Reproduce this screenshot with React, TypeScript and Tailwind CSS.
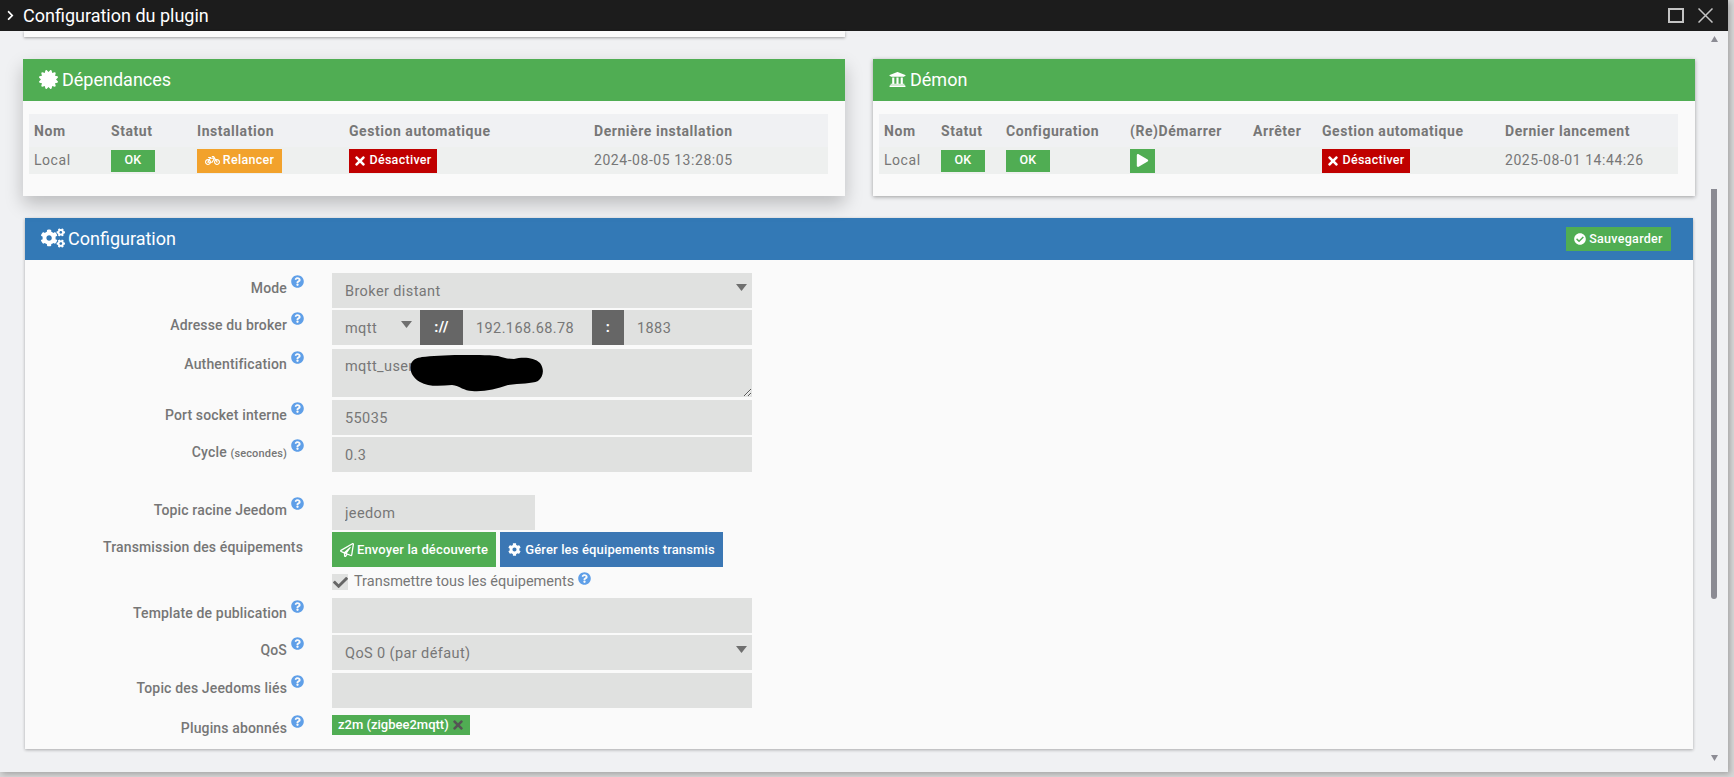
import { ReactNode } from 'react';
import {
  FaBicycle,
  FaCertificate,
  FaCheck,
  FaCheckCircle,
  FaChevronRight,
  FaCog,
  FaCogs,
  FaPlay,
  FaQuestionCircle,
  FaRegPaperPlane,
  FaTimes,
  FaUniversity,
} from 'react-icons/fa';

function Help() {
  return <FaQuestionCircle className="text-[13px] text-[#5f9fe8] shrink-0" />;
}

function Triangle() {
  return (
    <svg width="11" height="7" viewBox="0 0 11 7" className="shrink-0">
      <path d="M0 0h11L5.5 7z" fill="#6f6f6f" />
    </svg>
  );
}

function Badge({ children, color, w, h = 'h-6' }: { children: ReactNode; color: string; w: string; h?: string }) {
  return (
    <span className={`inline-flex items-center justify-center gap-[3px] align-middle text-[12.5px] font-medium tracking-[0.3px] text-white ${color} ${w} ${h}`}>
      {children}
    </span>
  );
}

function Ok() {
  return <Badge color="bg-[#50ad53]" w="w-[44px]" h="h-[22px]">OK</Badge>;
}

function Disable({ w }: { w: string }) {
  return (
    <Badge color="bg-[#c00000]" w={w}>
      <FaTimes className="-mx-[1px] text-[14px]" />
      Désactiver
    </Badge>
  );
}

function StatusTable({ columns, cells }: { columns: [string, string][]; cells: ReactNode[] }) {
  return (
    <div className="ml-[6px] mr-[17px] mt-[13px] text-[14px] tracking-[0.55px] text-[#777]">
      <div className="flex h-[33px] items-center bg-[#f0f1f3] pt-[2px] font-bold">
        {columns.map(([name, width]) => (
          <div key={name} className={`pl-[5px] ${width}`}>{name}</div>
        ))}
      </div>
      <div className="flex h-[27px] items-center bg-[#eef0ef]">
        {cells.map((cell, i) => (
          <div key={i} className={`pl-[5px] ${columns[i][1]}`}>{cell}</div>
        ))}
      </div>
    </div>
  );
}

function PanelHeader({ icon, title, color }: { icon: ReactNode; title: string; color: string }) {
  return (
    <div className={`flex h-[42px] items-center gap-[4px] px-4 pb-[2px] text-[18px] text-white ${color}`}>
      {icon}
      {title}
    </div>
  );
}

function Row({ label, children, className = '' }: { label: ReactNode; children: ReactNode; className?: string }) {
  return (
    <div className={`flex ${className}`}>
      <div className="flex w-[282px] justify-end gap-[4px]">
        <div className="pt-[5px] text-[14px] font-medium leading-5 tracking-[0.15px] text-[#767676]">{label}</div>
        <div className="w-[16px] pt-[2px]"><Help /></div>
      </div>
      <div className="flex-1 pl-[25px]">{children}</div>
    </div>
  );
}

const field = 'block h-[35px] w-[420px] bg-[#e0e1e0] px-[13px] pt-[1px] text-[14.5px] tracking-[0.4px] text-[#777] outline-none';

function Select({ value }: { value: string }) {
  return (
    <div className={`${field} flex items-center justify-between !pt-0 !pr-[5px]`}>
      <span className="pt-[3px]">{value}</span>
      <span className="-mt-[6px]"><Triangle /></span>
    </div>
  );
}

export default function App() {
  return (
    <div className="h-[777px] w-[1734px] overflow-hidden bg-[#d8d8d8] font-['Roboto',sans-serif]">
      <div className="flex h-[772px] w-[1728px] flex-col bg-[#f0f1f3] shadow-[2px_2px_6px_rgba(0,0,0,0.25)]">
        <div className="flex h-[31px] shrink-0 items-center justify-between bg-[#1c1c1c] pl-[5px] pr-[15px] text-white">
          <div className="flex items-center gap-[7px] text-[18px]">
            <FaChevronRight className="text-[11px]" />
            Configuration du plugin
          </div>
          <div className="flex items-center gap-[14px]">
            <div className="h-[15px] w-[16px] border-2 border-[#c4c4c4]" />
            <svg width="15" height="15" viewBox="0 0 15 15" stroke="#c4c4c4" strokeWidth="1.5">
              <path d="M0.5 0.5l14 14M14.5 0.5l-14 14" />
            </svg>
          </div>
        </div>

        <div className="flex min-h-0 flex-1">
          <main className="w-[1707px] shrink-0">
            <div className="ml-[24px] h-[6px] w-[821px] bg-[#fafafa] shadow-[0_1px_3px_rgba(0,0,0,0.35)]" />

            <div className="ml-[23px] mt-[22px] flex h-[137px] gap-[28px]">
              <section className="w-[822px] bg-[#fafafa] shadow-[0_8px_17px_rgba(0,0,0,0.22)]">
                <PanelHeader color="bg-[#50ad53]" title="Dépendances" icon={<FaCertificate className="text-[19px]" />} />
                <StatusTable
                  columns={[
                    ['Nom', 'w-[77px]'],
                    ['Statut', 'w-[86px]'],
                    ['Installation', 'w-[152px]'],
                    ['Gestion automatique', 'w-[245px]'],
                    ['Dernière installation', 'flex-1'],
                  ]}
                  cells={[
                    'Local',
                    <Ok />,
                    <Badge color="bg-[#f2a22c]" w="w-[85px]">
                      <FaBicycle className="text-[15px]" />
                      Relancer
                    </Badge>,
                    <Disable w="w-[88px]" />,
                    '2024-08-05 13:28:05',
                  ]}
                />
              </section>

              <section className="w-[822px] bg-[#fafafa] shadow-[0_1px_4px_rgba(0,0,0,0.35)]">
                <PanelHeader color="bg-[#50ad53]" title="Démon" icon={<FaUniversity className="text-[17px]" />} />
                <StatusTable
                  columns={[
                    ['Nom', 'w-[57px]'],
                    ['Statut', 'w-[65px]'],
                    ['Configuration', 'w-[124px]'],
                    ['(Re)Démarrer', 'w-[123px]'],
                    ['Arrêter', 'w-[69px]'],
                    ['Gestion automatique', 'w-[183px]'],
                    ['Dernier lancement', 'flex-1'],
                  ]}
                  cells={[
                    'Local',
                    <Ok />,
                    <Ok />,
                    <Badge color="bg-[#50ad53]" w="w-[25px]"><FaPlay className="text-[13px]" /></Badge>,
                    '',
                    <Disable w="w-[88px]" />,
                    '2025-08-01 14:44:26',
                  ]}
                />
              </section>
            </div>

            <section className="ml-[25px] mt-[22px] h-[531px] w-[1668px] bg-[#fafafa] shadow-[0_1px_3px_rgba(0,0,0,0.3)]">
              <div className="flex h-[42px] items-center justify-between bg-[#3379b6] pl-4 pr-[22px] text-white">
                <div className="flex items-center gap-[3px] pb-[2px] text-[18px]">
                  <FaCogs className="text-[24px]" />
                  Configuration
                </div>
                <Badge color="bg-[#50ad53]" w="w-[105px]">
                  <FaCheckCircle className="text-[12px]" />
                  Sauvegarder
                </Badge>
              </div>

              <div className="flex flex-col pt-[13px]">
                <Row label="Mode"><Select value="Broker distant" /></Row>
                <Row label="Adresse du broker" className="mt-[2px]">
                  <div className="flex h-[35px] w-[420px] items-center bg-[#e0e1e0] text-[14.5px] tracking-[0.4px] text-[#777]">
                    <div className="flex w-[88px] items-center justify-between pl-[13px] pr-[8px] pt-[2px]">
                      mqtt
                      <span className="-mt-[8px]"><Triangle /></span>
                    </div>
                    <div className="flex h-full w-[43px] items-center justify-center bg-[#666] font-bold text-white">://</div>
                    <div className="w-[129px] pl-[13px] pt-[2px]">192.168.68.78</div>
                    <div className="flex h-full w-[32px] items-center justify-center bg-[#666] font-bold text-white">:</div>
                    <div className="pl-[13px] pt-[2px]">1883</div>
                  </div>
                </Row>
                <Row label="Authentification" className="mt-[4px]">
                  <div className="relative h-[48px] w-[420px]">
                    <textarea
                      readOnly
                      defaultValue="mqtt_user"
                      className="block h-[48px] w-[420px] resize-y bg-[#e0e1e0] px-[13px] pt-[7px] text-[14.5px] tracking-[0.4px] text-[#777] outline-none"
                    />
                    <svg className="absolute left-[78px] top-[6px]" width="134" height="37" viewBox="0 0 134 37">
                      <path
                        d="M12 2C30 0 70-1 88 1c6 2 10 3 16 3 8-2 20-2 26 4 5 7 3 14-2 18-6 3-18 2-30 4-12 4-24 7-36 6-8 0-12-5-20-6-12 1-24 2-32-3C3 23-1 16 1 9 3 4 7 3 12 2z"
                        fill="#000"
                      />
                    </svg>
                  </div>
                </Row>
                <Row label="Port socket interne" className="mt-[3px]">
                  <input readOnly value="55035" className={field} />
                </Row>
                <Row
                  label={<>Cycle <span className="text-[11px]">(secondes)</span></>}
                  className="mt-[2px]"
                >
                  <input readOnly value="0.3" className={field} />
                </Row>
                <Row label="Topic racine Jeedom" className="mt-[23px]">
                  <input readOnly value="jeedom" className={`${field} !w-[203px]`} />
                </Row>

                <div className="mt-[2px] flex">
                  <div className="w-[278px] pt-[5px] text-right text-[14px] font-medium leading-5 tracking-[0.15px] text-[#767676]">
                    Transmission des équipements
                  </div>
                  <div className="pl-[29px]">
                    <div className="flex gap-[4px] text-[13px] font-medium tracking-[0.15px] text-white">
                      <div className="flex h-[35px] w-[164px] items-center justify-center gap-[3px] bg-[#50ad53]">
                        <FaRegPaperPlane className="text-[14px]" />
                        Envoyer la découverte
                      </div>
                      <div className="flex h-[35px] w-[223px] items-center justify-center gap-[4px] bg-[#3b77b4]">
                        <FaCog className="text-[13px]" />
                        Gérer les équipements transmis
                      </div>
                    </div>
                    <div className="mt-[7px] flex h-[16px] items-center gap-[6px] text-[14.5px] text-[#777]">
                      <div className="flex h-[16px] w-[16px] items-center justify-center bg-[#e0e1e0]">
                        <FaCheck className="text-[15px] text-[#666]" />
                      </div>
                      Transmettre tous les équipements
                      <span className="-mt-[7px] -ml-[2px]"><Help /></span>
                    </div>
                  </div>
                </div>

                <Row label="Template de publication" className="mt-[8px]">
                  <input readOnly value="" className={field} />
                </Row>
                <Row label="QoS" className="mt-[2px]"><Select value="QoS 0 (par défaut)" /></Row>
                <Row label="Topic des Jeedoms liés" className="mt-[3px]">
                  <input readOnly value="" className={field} />
                </Row>
                <Row label="Plugins abonnés" className="mt-[5px]">
                  <div className="mt-[2px] flex h-[20px] w-[138px] items-center gap-[2px] bg-[#50ad53] pl-[6px] text-[13px] font-medium text-white">
                    z2m (zigbee2mqtt)
                    <FaTimes className="text-[14px] text-[#555]" />
                  </div>
                </Row>
              </div>
            </section>
          </main>

          <aside className="flex w-[21px] flex-col items-center pl-[1px] pr-[8px]">
            <svg width="7" height="6" viewBox="0 0 7 6" className="mt-[5px]"><path d="M3.5 0L7 6H0z" fill="#8c8c94" /></svg>
            <div className="mt-[147px] h-[410px] w-[6px] rounded-b-[3px] bg-[#8b8b93]" />
            <svg width="7" height="6" viewBox="0 0 7 6" className="mt-[156px]"><path d="M0 0h7L3.5 6z" fill="#8c8c94" /></svg>
          </aside>
        </div>
      </div>
    </div>
  );
}
